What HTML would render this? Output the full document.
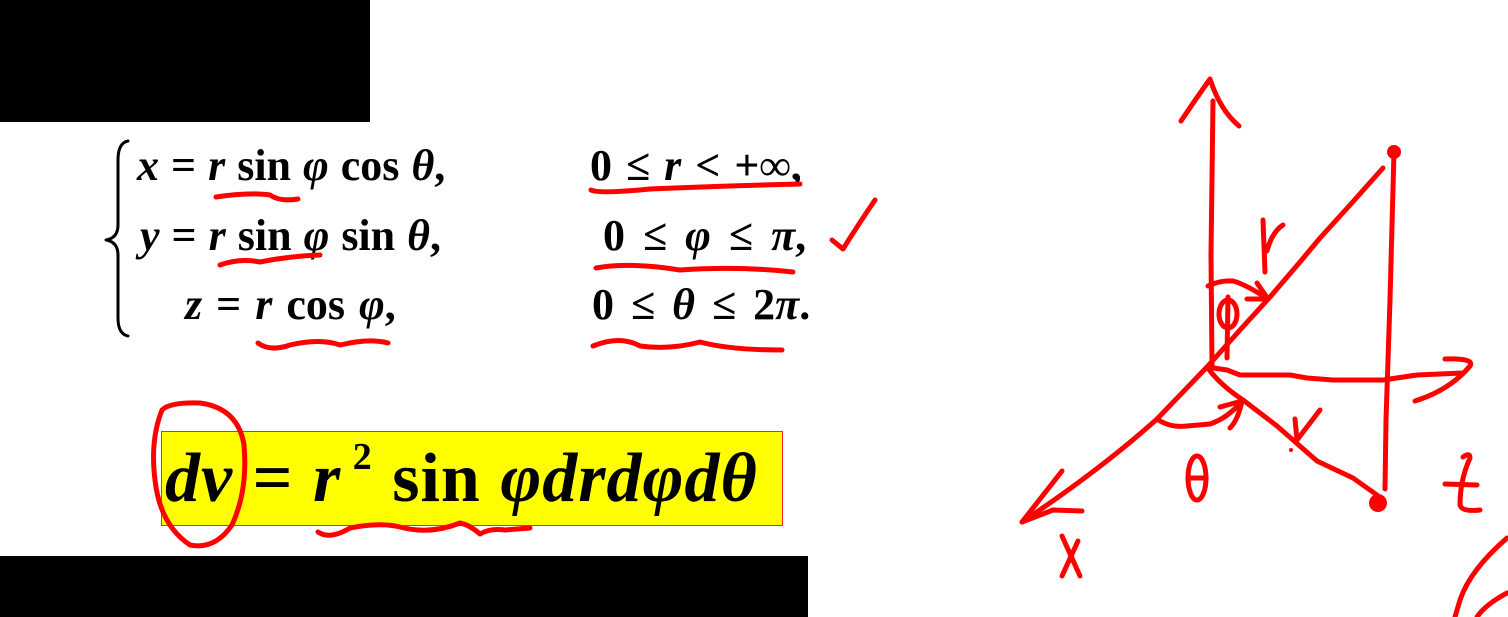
<!DOCTYPE html>
<html><head><meta charset="utf-8"><style>
html,body{margin:0;padding:0;background:#fff;}
body{width:1508px;height:617px;position:relative;overflow:hidden;font-family:"Liberation Serif","DejaVu Serif",serif;font-weight:bold;color:#000;}
.t{position:absolute;white-space:nowrap;font-size:44px;line-height:1;transform-origin:0 0;}
i{font-style:italic;}
</style></head><body>
<div style="position:absolute;left:0;top:0;width:370px;height:122px;background:#000"></div>
<div style="position:absolute;left:0;top:556px;width:808px;height:61px;background:#000"></div>

<div class="t" style="left:137px;top:144px;word-spacing:1px"><i>x</i> = <i>r</i> sin <i>φ</i> cos <i>θ</i>,</div>
<div class="t" style="left:140px;top:214px;word-spacing:1px"><i>y</i> = <i>r</i> sin <i>φ</i> sin <i>θ</i>,</div>
<div class="t" style="left:185px;top:283px;word-spacing:3px"><i>z</i> = <i>r</i> cos <i>φ</i>,</div>
<div class="t" style="left:590px;top:144px;word-spacing:3px;letter-spacing:0px">0 ≤ <i>r</i> &lt; +∞,</div>
<div class="t" style="left:603px;top:214px;word-spacing:7px">0 ≤ <i>φ</i> ≤ <i>π</i>,</div>
<div class="t" style="left:592px;top:283px;word-spacing:6px">0 ≤ <i>θ</i> ≤ 2<i>π</i>.</div>

<div style="position:absolute;left:161px;top:431px;width:620px;height:93px;background:#ff0;border:1px solid #f22;"></div>
<div class="t" style="left:165px;top:444px;font-size:70px;letter-spacing:1px;word-spacing:1px"><i>dv</i> = <i>r</i><sup style="font-size:38px;position:relative;top:-6px;vertical-align:top">&nbsp;2</sup> sin <i>φdrdφdθ</i></div>

<svg width="1508" height="617" style="position:absolute;left:0;top:0" fill="none" stroke-linecap="round" stroke-linejoin="round">
<path d="M128,141 Q118,143 118,160 L118,225 Q118,238 106,240 Q118,242 118,255 L118,318 Q118,334 128,336" stroke="#000" stroke-width="3"/>
<g stroke="#f00" stroke-width="5">
<path d="M216,197 Q250,192 270,195 Q280,202 298,199"/>
<path d="M591,190 Q600,194 650,189 Q720,186 800,184"/>
<path d="M220,265 Q240,258 260,262 Q290,256 320,255"/>
<path d="M596,268 Q630,262 680,270 Q740,266 793,272"/>
<path d="M258,343 Q270,352 290,345 Q320,338 340,345 Q370,338 388,343"/>
<path d="M593,346 Q620,335 640,346 Q670,350 700,342 Q730,350 782,350"/>
<path d="M832,240 L843,249 Q858,225 875,200"/>
<path d="M162,410 Q150,440 155,480 Q160,525 190,545 Q215,550 232,525 Q248,490 244,445 Q238,408 200,403 Q170,402 162,410"/>
<path d="M318,532 Q330,540 350,528 Q380,522 400,527 Q430,535 460,523 Q470,525 480,534 Q490,528 505,530 L530,528"/>
<path d="M1213,101 L1211,255 L1212,365"/>
<path d="M1181,121 Q1195,100 1210,79 Q1220,110 1239,126"/>
<path d="M1207,367 L1240,330 L1270,297 L1300,262 L1320,238 L1350,205 L1383,168"/>
<path d="M1394,152 L1390,300 L1386,420 L1385,489"/>
<path d="M1207,367 L1227,370 L1240,375 L1290,375 L1307,378 L1333,380 L1383,380 L1417,375 L1463,373"/>
<path d="M1445,359 Q1475,358 1470,366 Q1450,390 1415,401"/>
<path d="M1207,367 Q1220,385 1243,400 L1277,426 L1317,461 L1353,478 L1377,495"/>
<path d="M1295,419 L1297,440 L1320,410"/>
<path d="M1207,367 L1157,419 Q1100,470 1022,522"/>
<path d="M1062,471 L1022,522 L1053,510 L1082,511"/>
<path d="M1157,419 Q1170,428 1187,426 L1210,424 Q1228,418 1242,401"/>
<path d="M1220,407 L1242,401 Q1238,420 1230,428"/>
<path d="M1208,286 Q1220,280 1233,281 Q1245,284 1268,299"/>
<path d="M1247,299 L1268,299 L1257,283"/>
<ellipse cx="1228" cy="314" rx="9" ry="14"/>
<path d="M1228,297 L1227,358"/>
<path d="M1263,220 L1265,272 M1267,251 Q1272,232 1283,225"/>
<ellipse cx="1197" cy="478" rx="9" ry="22"/>
<path d="M1188,478 L1206,478"/>
<path d="M1062,536 L1080,576 M1078,541 L1062,576"/>
<path d="M1463,457 Q1470,452 1470,458 Q1460,480 1460,505 Q1462,512 1480,510 M1445,484 L1477,485"/>
<path d="M1507,538 Q1470,570 1460,600 L1455,617 M1507,593 Q1485,605 1477,617"/>
</g>
<g fill="#f00"><circle cx="1394" cy="152" r="7"/><circle cx="1378" cy="503" r="9"/><circle cx="1291" cy="450" r="2"/></g>
</svg>
</body></html>
